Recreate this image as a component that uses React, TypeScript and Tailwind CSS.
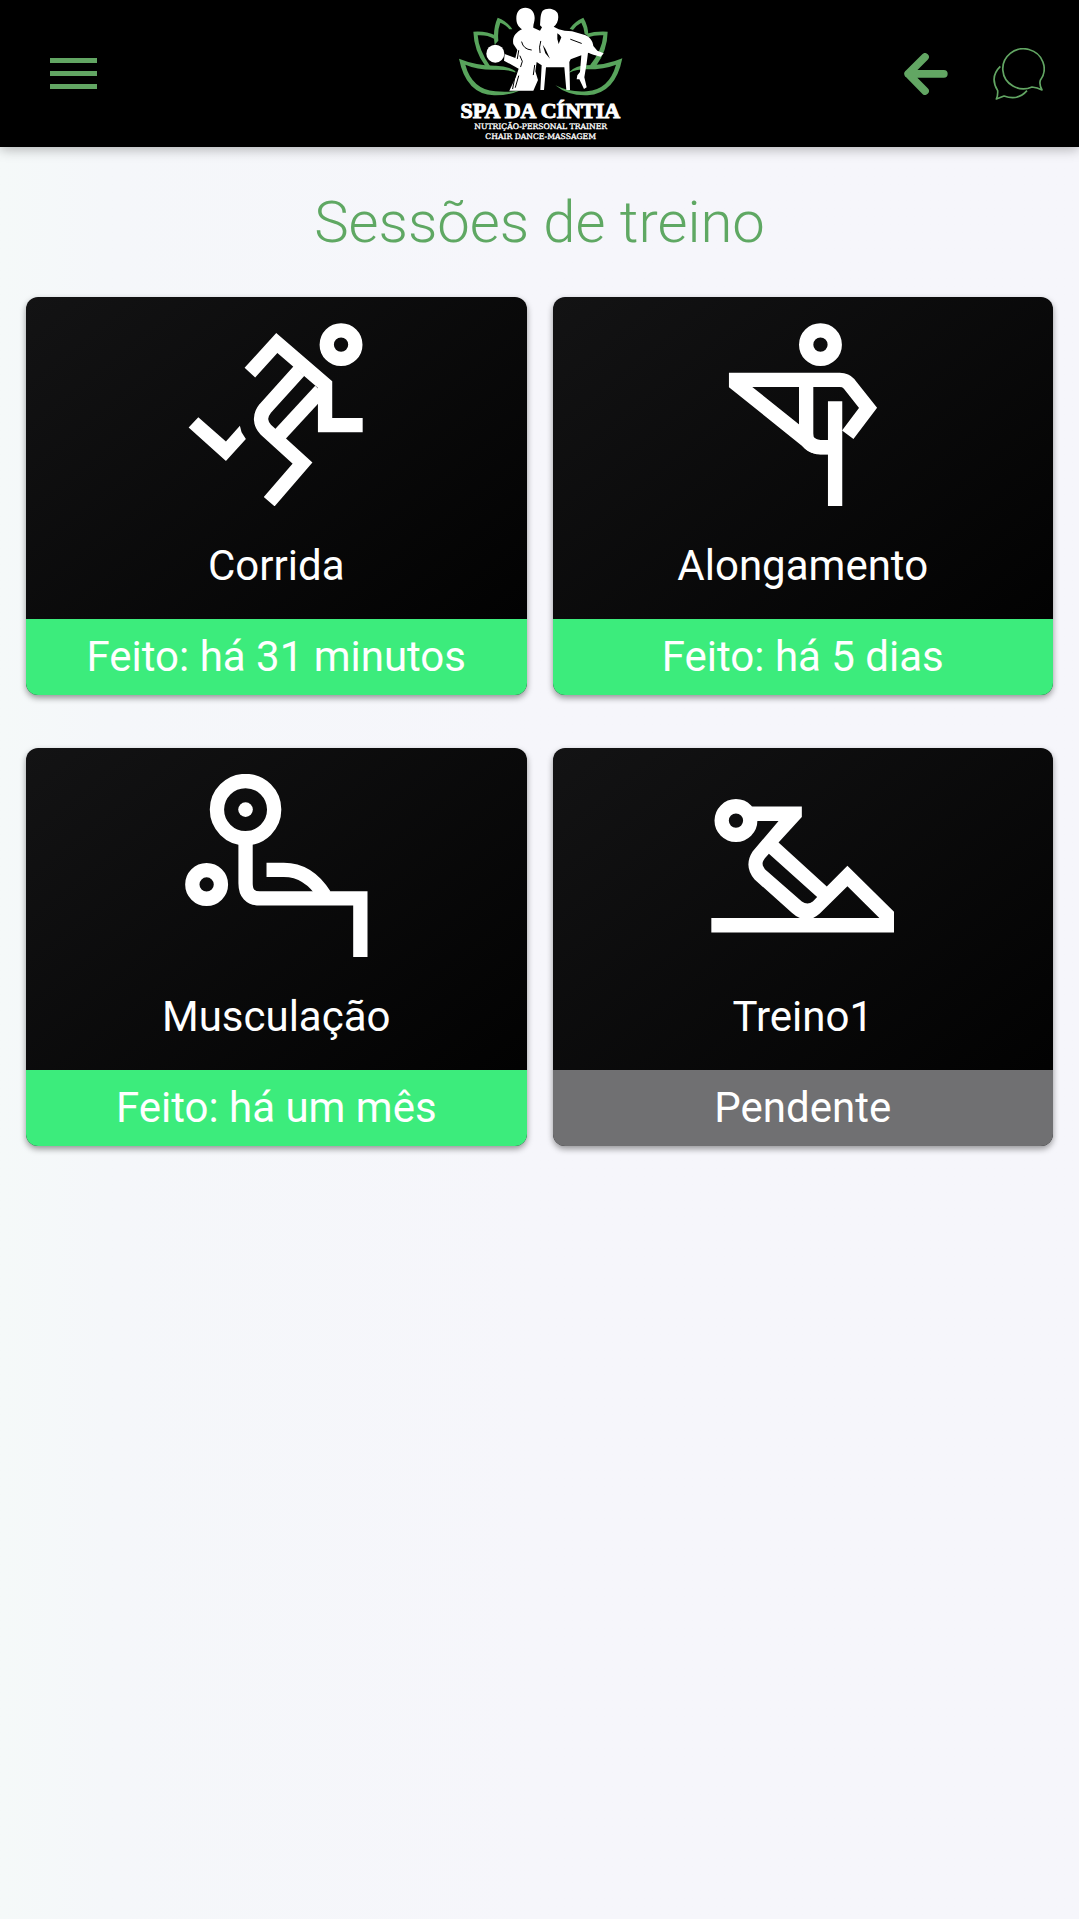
import type { ReactNode } from "react";

function Logo() {
  return (
    <svg viewBox="0 0 600 441" className="h-[147px] w-[200px]" role="img" aria-label="Spa da Cíntia">
      <g fill="#58a45c">
        <path d="M217 88Q202 64 173 53Q157 88 164 134L175 122Q172 90 181 68Q198 74 208 88Z" />
        <path d="M166 106Q138 92 100 95Q102 152 136 198L150 198Q116 150 113 106Q140 104 162 116Z" />
        <path d="M230 216Q204 196 164 197Q106 196 57 176Q78 282 162 286Q206 287 242 271Q204 278 166 274Q96 268 76 194Q112 210 166 209Q204 208 228 218Z" />
        <path d="M389 86Q404 64 430 53Q445 78 445 108L434 102Q432 82 424 68Q408 76 399 90Z" />
        <path d="M440 101Q466 93 503 95Q502 152 468 198L450 196Q486 152 490 106Q466 104 444 112Z" />
        <path d="M388 216Q410 195 440 196Q498 196 547 175Q526 282 442 286Q384 288 346 256Q390 278 440 274Q508 268 528 194Q494 208 440 208Q410 208 388 218Z" />
      </g>
      <g fill="#fff">
        <circle cx="166" cy="161" r="27" />
        <path d="M229 55C229 34 240 23 256 23C272 23 284 34 284 54C284 66 279 74 280 83L300 92L306 82L300 76C302 60 300 44 308 32C318 22 346 24 353 40C358 56 352 72 341 80L356 88L374 92L396 94L432 104C450 110 458 122 460 138L472 152L491 160L482 170L460 164L444 158L440 190L433 232L440 262L432 267L418 238L410 238L412 226L420 216L424 166L392 178L388 186L390 270L379 270L373 202L318 202L312 270L301 270L305 196L290 186L286 214L294 240L280 272L208 272L228 230L236 206L192 182L194 162L226 174L232 150L220 132C216 112 226 98 246 88C234 80 229 70 229 55Z" />
      </g>
      <path d="M352 100Q360 104 364 112L356 132Q350 118 352 100ZM308 134L316 146L330 176L316 160Z" fill="#000" />
      <g fill="none" stroke="#000" strokeWidth="3" strokeLinecap="round">
        <path d="M245 126Q250 148 274 150M302 124Q296 142 300 158M240 168L247 184L242 200M228 214L218 266M236 228L226 262M284 196L280 224M236 152L232 176M446 160L456 174M392 118L424 130" />
      </g>
      <g fill="#fff" stroke="#fff" textAnchor="middle">
        <text x="301" y="353" fontSize="66" fontWeight="700" strokeWidth="3" fontFamily="'Liberation Serif', serif">
          SPA DA CÍNTIA
        </text>
        <g fontSize="23" strokeWidth="1" fontFamily="'DejaVu Serif', serif">
          <text x="302" y="388">NUTRIÇÃO-PERSONAL TRAINER</text>
          <text x="302" y="416">CHAIR DANCE-MASSAGEM</text>
        </g>
      </g>
    </svg>
  );
}

function IconFrame({ viewBox, children }: { viewBox: string; children: ReactNode }) {
  return (
    <svg viewBox={viewBox} className="size-[183px]" fill="none" stroke="#fff" strokeWidth="43" aria-hidden="true">
      {children}
    </svg>
  );
}

const RunIcon = () => (
  <IconFrame viewBox="45 68 550 550">
    <circle cx="514" cy="133" r="43" />
    <path d="M240 217L321 128L466 253V375H579" />
    <path d="M388 212L286 325Q260 358 288 389L398 489L298 605" />
    <path d="M452 271L325 409" />
    <path d="M56 382L85 351L168 424L210 377L215 396L228 417L168 483Z" fill="#fff" stroke="none" />
  </IconFrame>
);

const StretchIcon = () => (
  <IconFrame viewBox="3 68 550 550">
    <circle cx="332" cy="133" r="43" />
    <path d="M57 239H390Q408 239 418 251L475 323L414 404" />
    <path d="M57 218H80L128 261L268 373L302 400Q316 420 332 420H376V463H332Q308 463 290 448L57 261Z" fill="#fff" stroke="none" />
    <path d="M289 239V400Q289 441 332 441H360" />
    <path d="M376 303V618" />
  </IconFrame>
);

const WeightsIcon = () => (
  <IconFrame viewBox="43 44 550 550">
    <circle cx="225" cy="151" r="86" />
    <circle cx="225" cy="151" r="22" fill="#fff" stroke="none" />
    <circle cx="108" cy="376" r="43" />
    <path d="M225 245V372Q225 418 268 418H570V594" />
    <path d="M288 332H340Q414 332 462 408" />
  </IconFrame>
);

const SitUpIcon = () => (
  <IconFrame viewBox="35 13 550 550">
    <circle cx="110" cy="153" r="43" />
    <path d="M158 111H308V142L238 219L383 351L445 289L585 427V489H36V446H302Q290 441 278 430L166 330Q132 290 160 246L238 154H158ZM209 253L197 266Q183 283 197 299L308 396Q325 409 341 396L354 383ZM445 350L362 432Q350 442 342 446H541Z" fill="#fff" stroke="none" fillRule="evenodd" />
  </IconFrame>
);

const sessions = [
  { name: "Corrida", status: "Feito: há 31 minutos", done: true, icon: <RunIcon /> },
  { name: "Alongamento", status: "Feito: há 5 dias", done: true, icon: <StretchIcon /> },
  { name: "Musculação", status: "Feito: há um mês", done: true, icon: <WeightsIcon /> },
  { name: "Treino1", status: "Pendente", done: false, icon: <SitUpIcon /> },
];

export default function App() {
  return (
    <div className="min-h-screen bg-linear-to-r from-[#f5f9f9] via-[#f5f7fa] via-10% to-[#f6f6fb] to-50% font-['Roboto',sans-serif]">
      <header className="grid grid-cols-[1fr_auto_1fr] items-center bg-black text-[#62a663] shadow-[0_2px_12px_rgba(0,0,0,0.3)]">
        <button type="button" aria-label="Menu" className="ml-[50px] flex w-[47px] flex-col gap-2">
          <span className="h-[5px] w-full bg-current" />
          <span className="h-[5px] w-full bg-current" />
          <span className="h-[5px] w-full bg-current" />
        </button>
        <Logo />
        <div className="mr-[34px] flex items-center justify-end gap-[45px]">
          <button type="button" aria-label="Voltar">
            <svg viewBox="134 157 130 125" className="h-[42px] w-11" fill="none" stroke="currentColor" strokeWidth="23" strokeLinecap="round" strokeLinejoin="round">
              <path d="M252 219H146M196 169L146 219L196 270" />
            </svg>
          </button>
          <button type="button" aria-label="Mensagens">
            <svg viewBox="399 142 156 156" className="size-[52px]" fill="none" stroke="currentColor" strokeWidth="5" strokeLinejoin="round">
              <path d="M546 268Q537 252 541 239A62 60 0 1 0 516 259Q532 261 546 268Z" />
              <path d="M421 197Q388 229 413 270Q414 284 409 295L432 286Q474 301 501 270" />
            </svg>
          </button>
        </div>
      </header>

      <main className="px-[26px] pt-[43px]">
        <h1 className="text-center text-[58px] leading-16 font-light text-[#5fa863]">Sessões de treino</h1>
        <div className="mt-[43px] grid grid-cols-2 gap-x-[26px] gap-y-[53px]">
          {sessions.map((s) => (
            <a
              key={s.name}
              href="#"
              className="flex flex-col overflow-hidden rounded-xl bg-linear-to-br/srgb from-[#131314] to-black text-center text-[42px] text-white shadow-[0_3px_6px_rgba(0,0,0,0.4)]"
            >
              <div className="flex flex-col items-center pt-[26px] pb-[29px]">
                {s.icon}
                <h2 className="mt-9 leading-12">{s.name}</h2>
              </div>
              <p className={s.done ? "bg-[#3cec7c] leading-[76px]" : "bg-[#707072] leading-[76px]"}>{s.status}</p>
            </a>
          ))}
        </div>
      </main>
    </div>
  );
}
